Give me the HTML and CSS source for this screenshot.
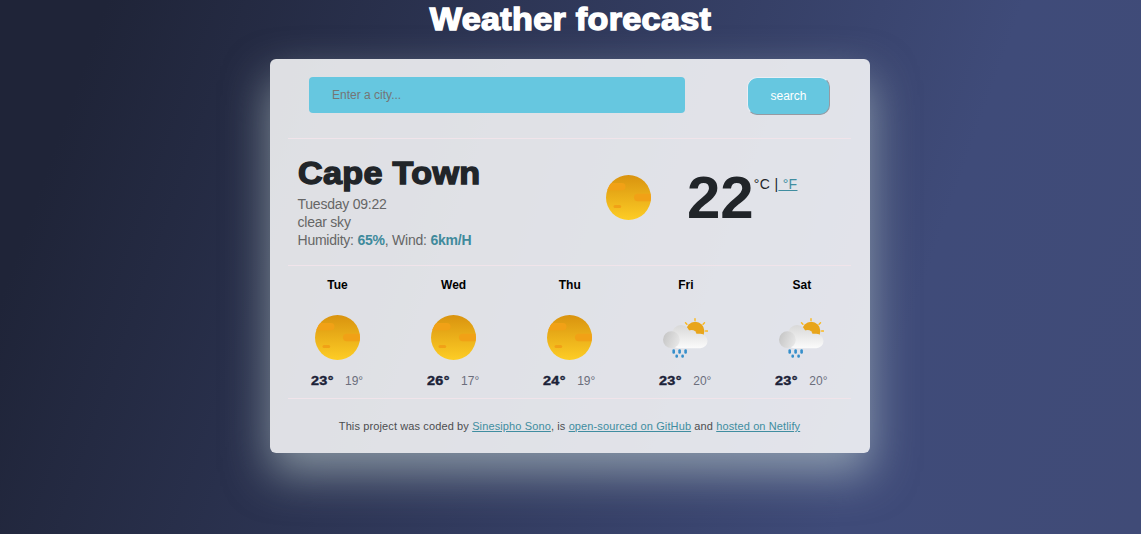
FILE: index.html
```html
<!DOCTYPE html>
<html lang="en">
<head>
<meta charset="utf-8">
<title>Weather forecast</title>
<link rel="stylesheet" href="styles.css">
</head>
<body>
<svg class="defs" aria-hidden="true">
  <defs>
    <linearGradient id="sunFill" x1="0" y1="0" x2="0" y2="1"><stop offset="0" stop-color="#d9930f"/><stop offset="1" stop-color="#fdcd25"/></linearGradient>
    <linearGradient id="cloudFill" gradientUnits="userSpaceOnUse" x1="0" y1="10" x2="0" y2="33"><stop offset="0" stop-color="#d8d8d8"/><stop offset="1" stop-color="#fbfbfb"/></linearGradient>
    <linearGradient id="puffFill" x1="0" y1="0.3" x2="1" y2="0.7"><stop offset="0" stop-color="#c6c6c6"/><stop offset="1" stop-color="#e8e8e8"/></linearGradient>
    <clipPath id="disc"><circle cx="22.5" cy="22.5" r="22.5"/></clipPath>
    <symbol id="sun" viewBox="0 0 45 45">
      <circle cx="22.5" cy="22.5" r="22.5" fill="url(#sunFill)"/>
      <g clip-path="url(#disc)" fill="#f1a116"><rect x="-6" y="8" width="25.5" height="7.3" rx="3.6"/><rect x="28" y="18.7" width="25" height="7.5" rx="3.7"/><rect x="7.5" y="30" width="7.7" height="3" rx="1.5"/></g>
    </symbol>
    <symbol id="rain" viewBox="0 0 45 45">
      <g stroke="#fbb81c" stroke-width="1.4" stroke-linecap="round"><path d="M32 3.600v2M22.500 7.800l1.400 1.400M41.500 7.800l-1.400 1.400M42.600 16h1.800"/></g>
      <circle cx="32.200" cy="16" r="9.200" fill="#e8a51b"/>
      <g fill="url(#cloudFill)"><circle cx="18" cy="19" r="9"/><circle cx="28.600" cy="19.800" r="4.900"/><rect x="8" y="18.800" width="36.500" height="14.400" rx="7.200"/></g>
      <circle cx="8.400" cy="24.700" r="8.400" fill="url(#puffFill)"/>
      <g fill="#368fcb"><rect x="9.400" y="34.200" width="2.600" height="4.500" rx="1.200"/><rect x="15.300" y="34.200" width="2.600" height="4.500" rx="1.200"/><rect x="21.300" y="34.200" width="2.600" height="4.500" rx="1.200"/><rect x="12.400" y="39.600" width="2.600" height="3.200" rx="1.200"/><rect x="18.300" y="39.600" width="2.600" height="3.200" rx="1.200"/></g>
    </symbol>
  </defs>
</svg>
<h1 class="title">Weather forecast</h1>
<main class="card">
  <form class="search">
    <input class="search-input" type="text" placeholder="Enter a city...">
    <button class="search-button" type="button">search</button>
  </form>
  <section class="current">
    <div class="place">
      <h2 class="city">Cape Town</h2>
      <ul class="details">
        <li>Tuesday 09:22</li>
        <li>clear sky</li>
        <li>Humidity: <strong>65%</strong>, Wind: <strong>6km/H</strong></li>
      </ul>
    </div>
    <div class="now">
      <svg class="icon"><use href="#sun"/></svg>
      <strong class="temperature">22</strong>
      <span class="units">°C |<a href="#"> °F</a></span>
    </div>
  </section>
  <section class="forecast">
    <div class="day"><div class="name">Tue</div><svg class="icon"><use href="#sun"/></svg><div class="range"><b>23°</b><span>19°</span></div></div>
    <div class="day"><div class="name">Wed</div><svg class="icon"><use href="#sun"/></svg><div class="range"><b>26°</b><span>17°</span></div></div>
    <div class="day"><div class="name">Thu</div><svg class="icon"><use href="#sun"/></svg><div class="range"><b>24°</b><span>19°</span></div></div>
    <div class="day"><div class="name">Fri</div><svg class="icon"><use href="#rain"/></svg><div class="range"><b>23°</b><span>20°</span></div></div>
    <div class="day"><div class="name">Sat</div><svg class="icon"><use href="#rain"/></svg><div class="range"><b>23°</b><span>20°</span></div></div>
  </section>
  <footer class="credit">This project was coded by <a href="#">Sinesipho Sono</a>, is <a href="#">open-sourced on GitHub</a> and <a href="#">hosted on Netlify</a></footer>
</main>
</body>
</html>
```
FILE: styles.css
```css
* { box-sizing: border-box; }
body {
  margin: 0;
  height: 534px;
  overflow: hidden;
  background: linear-gradient(109.6deg, #1f2438 8%, #3f4b79 77%, #404b77 100%);
  font-family: "Liberation Sans", Arial, sans-serif;
  color: #212529;
}
.defs { display: block; width: 0; height: 0; }
.title, .city {
  margin: 0;
  font: bold 31px/40px "Liberation Sans", Arial, sans-serif;
  letter-spacing: 0.3px;
  -webkit-text-stroke: 1.4px currentColor;
  transform: scaleX(1.1);
}
.title {
  height: 59px;
  text-align: center;
  color: #fff;
}
.city { padding-left: 1px; transform-origin: left; }
.card {
  width: 600px;
  height: 394px;
  margin: 0 auto 0 270px;
  padding: 0 19px 0 18px;
  border-radius: 6px;
  background: rgba(255, 255, 255, 0.85);
  box-shadow: 0 20px 45px rgba(203, 222, 220, 0.56);
}
.search {
  display: flex;
  align-items: flex-start;
  height: 80px;
  padding: 18px 21px 0;
  border-bottom: 1px solid #f1e4ea;
}
.search-input {
  width: 376px;
  height: 36px;
  padding: 0 23px;
  border: 0;
  border-radius: 4px;
  background: #66c7e0;
  font: 12px "Liberation Sans", Arial, sans-serif;
}
.search-input::placeholder { color: #757575; }
.search-button {
  width: 83px;
  height: 38px;
  margin: 0 0 0 62px;
  padding: 0;
  border: 1px solid;
  border-color: #eceef4 #969aa2 #969aa2 #eceef4;
  border-radius: 10px;
  background: #66c7e0;
  color: #fff;
  font: 12px "Liberation Sans", Arial, sans-serif;
}
.current {
  display: flex;
  height: 127px;
  padding: 15px 9px 0;
  border-bottom: 1px solid #f1e4ea;
}
.place { width: 309px; }
.details {
  margin: 1px 0 0;
  padding: 0 0 0 0.5px;
  list-style: none;
  font-size: 14px;
  line-height: 18px;
  letter-spacing: -0.23px;
  color: #666;
}
.details strong { color: #408a9c; }
.now { display: flex; align-items: flex-start; padding-top: 21px; }
.icon { display: block; width: 45px; height: 45px; }
.temperature { margin: -11px 0 0 36px; font-size: 60px; line-height: 68px; }
.units { font-size: 14px; line-height: 18px; letter-spacing: 0.35px; }
.units a, .credit a { color: #408da0; }
.forecast {
  display: grid;
  grid-template-columns: repeat(5, 116.1px);
  height: 132px;
  margin: 0 -9px;
}
.day { display: flex; flex-direction: column; align-items: center; padding-top: 12px; }
.name { height: 37px; padding-left: 1px; font-size: 12px; line-height: 14px; font-weight: bold; color: #000; }
.range { display: flex; gap: 10px; margin-top: 13px; font-size: 12px; line-height: 16px; color: #6b6e7c; }
.range b {
  width: 24px;
  letter-spacing: 0.3px;
  color: #1b2238;
  -webkit-text-stroke: 0.4px currentColor;
  transform: scaleX(1.2);
  transform-origin: left;
}
.credit {
  height: 50px;
  border-top: 1px solid #f1e4ea;
  padding-top: 21px;
  font-size: 11px;
  line-height: 13px;
  letter-spacing: 0.12px;
  text-align: center;
  color: #4c4d50;
}
```
